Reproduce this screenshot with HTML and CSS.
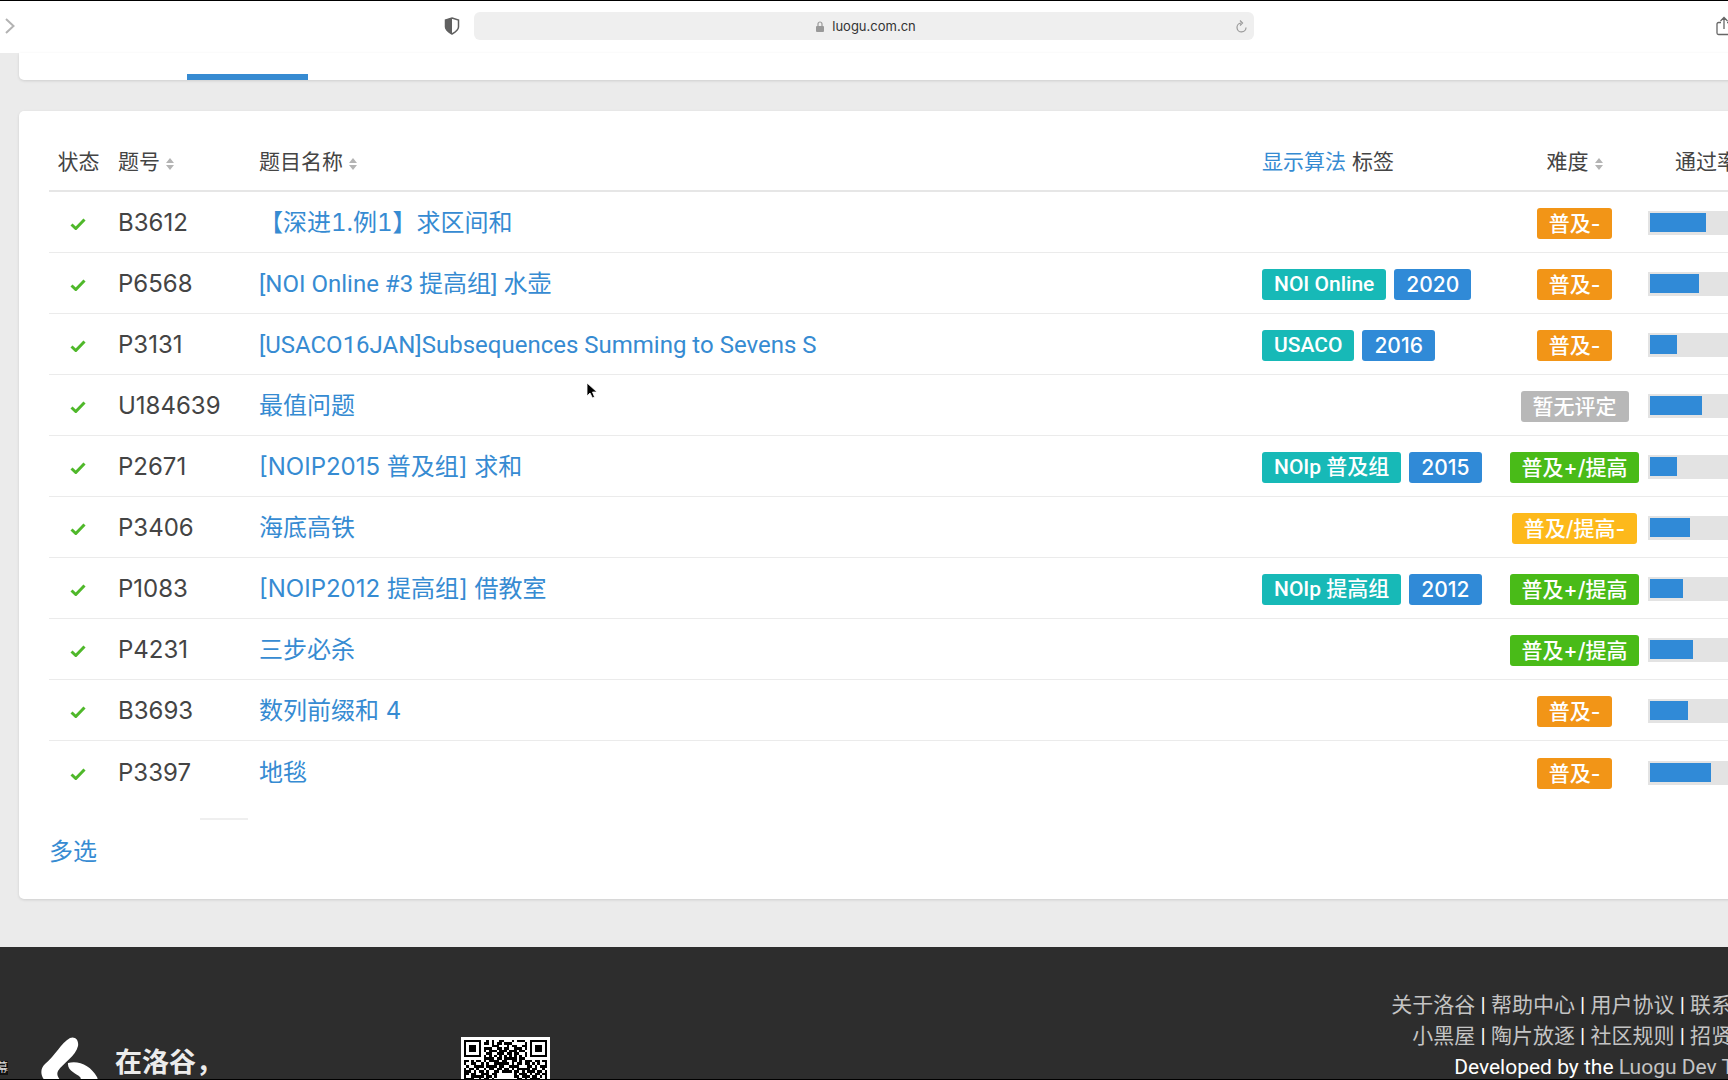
FILE: index.html
```
<!DOCTYPE html>
<html lang="zh-CN">
<head>
<meta charset="utf-8">
<title>洛谷</title>
<link rel="stylesheet" href="styles.css">
</head>
<body>
<svg class="defs" aria-hidden="true">
  <symbol id="check" viewBox="0 0 16 12"><path d="M1.5 6.5 5.8 10.5 14.5 1.5" fill="none" stroke="#4fb82a" stroke-width="3"/></symbol>
  <symbol id="sort" viewBox="0 0 8 12"><path d="M4 0 8 5H0zM4 12 0 7h8z" fill="#b4b4b4"/></symbol>
</svg>

<header class="toolbar">
  <div class="toolbar-side">
    <button class="tool" aria-label="前进"><svg width="10" height="16" viewBox="0 0 10 16"><path d="M1 1l7.500 7L1 15" fill="none" stroke="#b3b3b3" stroke-width="2"/></svg></button>
    <button class="tool" aria-label="隐私报告"><svg width="16" height="18" viewBox="0 0 16 18"><path d="M8 1 14.500 3v7c0 3-3 5-6.500 7-3.500-2-6.500-4-6.500-7V3z" fill="#fff" stroke="#606060" stroke-width="1.500"/><path d="M8 1v16c-3.500-2-6.500-4-6.500-7V3z" fill="#606060"/></svg></button>
  </div>
  <div class="address">
    <svg class="lock" width="8" height="11" viewBox="0 0 8 11"><path d="M2 5V3a2 2 0 0 1 4 0v2" fill="none" stroke="#999" stroke-width="1.200"/><rect y="5" width="8" height="6" rx="1" fill="#999"/></svg>
    <span class="host">luogu.com.cn</span>
    <button class="tool reload" aria-label="重新载入"><svg width="11" height="13" viewBox="0 0 11 13"><path d="M5 3a4.500 4.500 0 1 0 5 4.500M4 .5 6.500 3 4 5.500" fill="none" stroke="#999" stroke-width="1.200"/></svg></button>
  </div>
  <div class="toolbar-side end">
    <button class="tool" aria-label="共享"><svg width="16" height="20" viewBox="0 0 16 20"><path d="M5 6.500H2.500a1.500 1.500 0 0 0-1.500 1.500v9A1.500 1.500 0 0 0 2.500 18.500h11a1.500 1.500 0 0 0 1.500-1.500V8a1.500 1.500 0 0 0-1.500-1.500H11M8 13V1.500M4.500 5 8 1.500 11.500 5" fill="none" stroke="#666" stroke-width="1.300"/></svg></button>
  </div>
</header>

<main class="page">
  <nav class="tabs" aria-label="题单"><span class="tab-active"></span></nav>

  <section class="card">
    <table class="problems">
      <colgroup><col class="c-status"><col class="c-id"><col><col class="c-tags"><col class="c-diff"><col class="c-rate"></colgroup>
      <thead><tr>
        <th class="center">状态</th>
        <th>题号<svg class="sort"><use href="#sort"/></svg></th>
        <th>题目名称<svg class="sort"><use href="#sort"/></svg></th>
        <th><a href="#">显示算法</a> 标签</th>
        <th class="center">难度<svg class="sort"><use href="#sort"/></svg></th>
        <th class="center">通过率</th>
      </tr></thead>
      <tbody>
        <tr><td class="center"><svg class="check"><use href="#check"/></svg></td><td>B3612</td><td><a class="tabular" href="#">【深进1.例1】求区间和</a></td><td></td><td class="center"><span class="tag orange">普及-</span></td><td class="rate"><div class="bar"><i style="width:56px"></i></div></td></tr>
        <tr><td class="center"><svg class="check"><use href="#check"/></svg></td><td>P6568</td><td><a class="latin" href="#">[NOI Online #3 提高组] 水壶</a></td><td><div class="tags"><span class="tag teal latin">NOI Online</span><span class="tag blue">2020</span></div></td><td class="center"><span class="tag orange">普及-</span></td><td class="rate"><div class="bar"><i style="width:49px"></i></div></td></tr>
        <tr><td class="center"><svg class="check"><use href="#check"/></svg></td><td>P3131</td><td><a class="latin" href="#">[USACO16JAN]Subsequences Summing to Sevens S</a></td><td><div class="tags"><span class="tag teal latin">USACO</span><span class="tag blue">2016</span></div></td><td class="center"><span class="tag orange">普及-</span></td><td class="rate"><div class="bar"><i style="width:27px"></i></div></td></tr>
        <tr><td class="center"><svg class="check"><use href="#check"/></svg></td><td>U184639</td><td><a href="#">最值问题</a></td><td></td><td class="center"><span class="tag gray">暂无评定</span></td><td class="rate"><div class="bar"><i style="width:52px"></i></div></td></tr>
        <tr><td class="center"><svg class="check"><use href="#check"/></svg></td><td>P2671</td><td><a href="#">[NOIP2015 普及组] 求和</a></td><td><div class="tags"><span class="tag teal latin">NOIp 普及组</span><span class="tag blue">2015</span></div></td><td class="center"><span class="tag green">普及+/提高</span></td><td class="rate"><div class="bar"><i style="width:27px"></i></div></td></tr>
        <tr><td class="center"><svg class="check"><use href="#check"/></svg></td><td>P3406</td><td><a href="#">海底高铁</a></td><td></td><td class="center"><span class="tag yellow">普及/提高-</span></td><td class="rate"><div class="bar"><i style="width:40px"></i></div></td></tr>
        <tr><td class="center"><svg class="check"><use href="#check"/></svg></td><td>P1083</td><td><a href="#">[NOIP2012 提高组] 借教室</a></td><td><div class="tags"><span class="tag teal latin">NOIp 提高组</span><span class="tag blue">2012</span></div></td><td class="center"><span class="tag green">普及+/提高</span></td><td class="rate"><div class="bar"><i style="width:33px"></i></div></td></tr>
        <tr><td class="center"><svg class="check"><use href="#check"/></svg></td><td>P4231</td><td><a href="#">三步必杀</a></td><td></td><td class="center"><span class="tag green">普及+/提高</span></td><td class="rate"><div class="bar"><i style="width:43px"></i></div></td></tr>
        <tr><td class="center"><svg class="check"><use href="#check"/></svg></td><td>B3693</td><td><a href="#">数列前缀和 4</a></td><td></td><td class="center"><span class="tag orange">普及-</span></td><td class="rate"><div class="bar"><i style="width:38px"></i></div></td></tr>
        <tr><td class="center"><svg class="check"><use href="#check"/></svg></td><td>P3397</td><td><a href="#">地毯</a></td><td></td><td class="center"><span class="tag orange">普及-</span></td><td class="rate"><div class="bar"><i style="width:61px"></i></div></td></tr>
      </tbody>
    </table>
    <hr class="rule">
    <a class="multi" href="#">多选</a>
  </section>
</main>

<footer class="footer">
  <div class="brand">
    <svg class="logo" width="58" height="60" viewBox="0 0 58 60"><path d="M29 1C34-1 38 3 37 9C35 19 22 26 17 34C14 40 22 43 20 50L10 50C-1 41-2 33 4 27C14 19 20 6 29 1Z" fill="#fff"/><path d="M27 26C38 23 50 29 56 40C58 44 55 48 52 52H32C35 49 42 43 39 40C36 37 26 34 27 26Z" fill="#fff"/></svg>
    <strong class="slogan">在洛谷，</strong>
  </div>
  <svg class="qr" id="qr" viewBox="-1 -1 35 35" role="img" aria-label="二维码" shape-rendering="crispEdges"></svg>
  <div class="links">
    <p><a href="#">关于洛谷</a> | <a href="#">帮助中心</a> | <a href="#">用户协议</a> | <a href="#">联系我们</a></p>
    <p><a href="#">小黑屋</a> | <a href="#">陶片放逐</a> | <a href="#">社区规则</a> | <a href="#">招贤纳才</a></p>
    <p>Developed by the <a href="#">Luogu Dev Team</a></p>
  </div>
</footer>

<span class="caption">字幕</span>
<svg class="cursor" width="12" height="18" viewBox="0 0 12 18"><path d="M1 1v13l3-3 2.500 5 2-1L6.500 10H11z" fill="#000" stroke="#fff" stroke-width=".8"/></svg>
<script src="qr.js"></script>
</body>
</html>
```
FILE: styles.css
```
* { box-sizing: border-box; }
body {
  display: flex;
  flex-direction: column;
  height: 100vh;
  margin: 0;
  overflow: hidden;
  position: relative;
  border-top: 1px solid #000;
  border-bottom: 1px solid #000;
  background: #ebebeb;
  color: #444;
  font-family: Inter, "Noto Sans CJK SC", sans-serif;
  font-size: 24px;
}
a { color: #368bd2; text-decoration: none; }
.defs { position: absolute; width: 0; height: 0; }
.latin { font-family: Roboto, "Noto Sans CJK SC", sans-serif; }
.tabular { font-variant-numeric: tabular-nums; }

.toolbar {
  flex: none;
  display: flex;
  align-items: center;
  gap: 14px;
  height: 52px;
  padding-bottom: 2px;
  background: #fff;
}
.toolbar-side {
  flex: 458 1 0;
  display: flex;
  justify-content: space-between;
  padding-left: 5px;
}
.toolbar-side.end { flex-grow: 462; justify-content: flex-end; margin-right: -4px; }
.tool {
  display: flex;
  align-items: center;
  padding: 0;
  border: 0;
  background: none;
}
.address {
  flex: 780 1 0;
  display: flex;
  align-items: center;
  justify-content: center;
  gap: 8px;
  height: 28px;
  padding-left: 4px;
  position: relative;
  border-radius: 6px;
  background: #efefef;
}
.host { font-size: 13px; color: #333; }
.reload { position: absolute; right: 7px; }

.page { flex: none; margin: 0 -72px 48px 19px; }
.tabs {
  height: 27px;
  margin-bottom: 31px;
  padding: 21px 0 0 168px;
  border-radius: 0 0 5px 5px;
  background: #fff;
  box-shadow: 0 1px 3px rgba(0, 0, 0, .12);
}
.tab-active { display: block; width: 121px; height: 6px; background: #368bd2; }

.card {
  height: 788px;
  padding: 22px 30px;
  border-radius: 5px;
  background: #fff;
  box-shadow: 0 1px 3px rgba(0, 0, 0, .12);
}
.problems {
  width: 100%;
  table-layout: fixed;
  border-collapse: separate;
  border-spacing: 0;
}
.c-status { width: 59px; }
.c-id { width: 141px; }
.c-tags { width: 254px; }
.c-diff { width: 137px; }
.c-rate { width: 127px; }
th {
  height: 59px;
  padding: 0 0 4px 10px;
  border-bottom: 2px solid #e6e6e6;
  font-size: 21px;
  font-weight: 400;
  text-align: left;
  white-space: nowrap;
}
td {
  height: 61px;
  padding: 2px 0 0 10px;
  border-bottom: 1px solid #ebebeb;
  line-height: 32px;
  white-space: nowrap;
}
tbody tr:last-child td { border-bottom: 0; }
.center { padding-left: 0; text-align: center; }
th:first-child, td:first-child { padding-left: 0; }
.sort { width: 8px; height: 12px; margin-left: 6px; vertical-align: -1px; }
.check { width: 16px; height: 12px; margin-right: 2px; vertical-align: middle; }

.tags { display: flex; gap: 8px; }
.tag {
  display: inline-block;
  padding: 0 12px;
  border-radius: 3px;
  color: #fff;
  font-size: 21px;
  font-weight: 500;
  line-height: 31px;
  vertical-align: middle;
}
.teal { background: #17b9b7; }
.blue { background: #308ad7; }
.orange { background: #f29517; }
.yellow { background: #fdb91b; }
.green { background: #49bb18; }
.gray { background: #b8b8b8; }

.rate { padding-left: 5px; }
.bar { height: 24px; padding: 2px; background: #e3e3e3; }
.bar i { display: block; height: 19px; background: #308ad7; }

.rule { width: 48px; height: 2px; margin: 16px 0 16px 151px; border: 0; background: #efefef; }
.multi { display: block; line-height: 32px; }

.footer {
  flex: 1 0 auto;
  display: flex;
  align-items: flex-start;
  margin-bottom: -40px;
  padding: 43px 0 0 41px;
  background: #2d2d2d;
  color: #fff;
  font-size: 21px;
}
.brand { display: flex; gap: 16px; width: 420px; padding-top: 47px; }
.slogan { color: #ececec; font-size: 27px; line-height: 52px; }
.qr { flex: none; width: 89px; height: 89px; margin-top: 47px; background: #fff; }
.links {
  flex: 1;
  margin-right: -46px;
  font-family: Roboto, "Noto Sans CJK SC", sans-serif;
  text-align: right;
  white-space: nowrap;
}
.links p { margin: 0; line-height: 31px; }
.links a { color: #c4c4c4; }

.caption {
  position: absolute;
  left: -16px;
  bottom: 4px;
  background: #111;
  color: #ddd;
  font-size: 12px;
  line-height: 14px;
}
.cursor { position: absolute; left: 586px; top: 381px; }
```
FILE: qr.js
```
const rows = [
  "111111100101001100010111001111111",
  "100000101101011011100000101000001",
  "101110100001110001011001101011101",
  "101110101110011011001110101011101",
  "101110101011101110111011001011101",
  "100000100110011101101100101000001",
  "111111101010101010101010101111111",
  "000000001111011011111011000000000",
  "110101101011110110011010111011011",
  "100110010100111111010110110101001",
  "010011110111101100111100011010111",
  "101101001011011011010111110110010",
  "111010110100110111101101011101101",
  "110110011101100000001011101011011",
  "100111110110100000001101110110101",
  "111100101101000000000110101111001",
  "111101110011000000000101111011011"
];
const svg = document.getElementById("qr");
rows.forEach((row, y) => {
  [...row].forEach((cell, x) => {
    if (cell === "0") return;
    const r = document.createElementNS("http://www.w3.org/2000/svg", "rect");
    r.setAttribute("x", x);
    r.setAttribute("y", y);
    r.setAttribute("width", 1);
    r.setAttribute("height", 1);
    svg.appendChild(r);
  });
});
```
